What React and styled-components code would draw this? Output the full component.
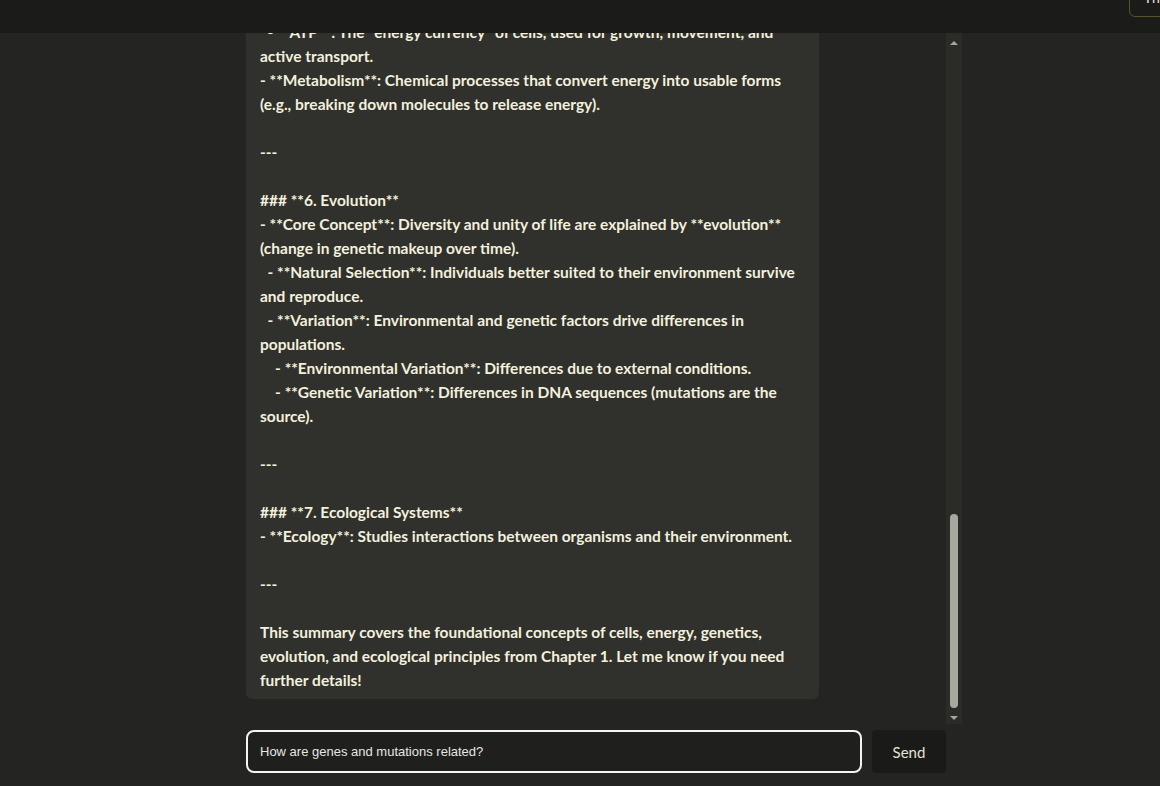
import React, { useLayoutEffect, useRef, useState } from 'react'
import styled, { createGlobalStyle } from 'styled-components'

const GlobalStyle = createGlobalStyle`
  html, body {
    margin: 0;
    padding: 0;
    background: #242422;
    overflow: hidden;
  }
`

const Page = styled.div`
  width: 100vw;
  height: 100vh;
  display: flex;
  flex-direction: column;
  font-family: Lato, "Open Sans", sans-serif;
`

const TopBar = styled.div`
  height: 33px;
  flex-shrink: 0;
  background: #1b1b19;
  display: flex;
  justify-content: flex-end;
  align-items: flex-start;
  overflow: hidden;
`

const ThemeButton = styled.button`
  margin-top: -11px;
  margin-right: -41px;
  height: 28px;
  padding: 0 14px 10px;
  background: #1b1b19;
  color: #e8e6dc;
  border: 1px solid #57532f;
  border-radius: 6px;
  font-family: Lato, sans-serif;
  font-size: 14px;
  display: flex;
  align-items: flex-end;
`

const Main = styled.div`
  margin-left: 246px;
  width: 716px;
  display: flex;
  flex-direction: column;
`

const ChatFrame = styled.div`
  position: relative;
  height: 691px;
`

const ChatScroll = styled.div`
  height: 100%;
  box-sizing: border-box;
  padding-bottom: 25px;
  overflow-y: scroll;
  scrollbar-width: none;
  display: flex;
  flex-direction: column;
  gap: 12px;
`

const ScrollRail = styled.div`
  position: absolute;
  top: 0;
  right: 0;
  bottom: 0;
  width: 16px;
  background: #2b2b28;
`

const Arrow = styled.div`
  position: absolute;
  left: 4px;
  ${p => (p.$down ? 'bottom: 4px;' : 'top: 8px;')}
  width: 0;
  height: 0;
  border-left: 4px solid transparent;
  border-right: 4px solid transparent;
  ${p => (p.$down ? 'border-top' : 'border-bottom')}: 4px solid #a6a59c;
`

const Thumb = styled.div`
  position: absolute;
  left: 4px;
  width: 8px;
  border-radius: 4px;
  background: #a9a8a0;
`

const Bubble = styled.div`
  align-self: ${p => (p.$user ? 'flex-end' : 'flex-start')};
  flex-shrink: 0;
  max-width: 80%;
  width: ${p => (p.$user ? 'auto' : '80%')};
  box-sizing: border-box;
  padding: 7px 14px;
  background: ${p => (p.$user ? '#3a3a36' : '#30302d')};
  border-radius: 6px;
  color: #f3f0dc;
  font-size: 15.5px;
  font-weight: 700;
  line-height: 24px;
  white-space: pre-wrap;
`

const InputRow = styled.form`
  margin-top: 6px;
  width: 700px;
  display: flex;
  gap: 10px;
`

const Input = styled.input`
  flex: 1;
  height: 43px;
  box-sizing: border-box;
  padding: 0 12px;
  background: #1f1f1d;
  border: 2px solid #f4f4f0;
  border-radius: 8px;
  color: #e6e6e2;
  caret-color: #ffffff;
  font-family: "Liberation Sans", Arial, sans-serif;
  font-size: 13px;
  outline: none;
`

const SendButton = styled.button`
  width: 74px;
  height: 43px;
  background: #1a1a18;
  border: none;
  border-radius: 4px;
  color: #e4e2da;
  font-family: Lato, sans-serif;
  font-size: 15px;
`

const greeting = `Hello! I have read your uploaded textbook. Ask me anything about its chapters, and I will answer using the content of the book.`

const topics = `Chapter 1 introduces the study of life. It covers:

- The characteristics shared by all living things
- The levels of biological organization
- The structure of cells
- Genetics and heredity
- Energy and metabolism
- Evolution as the unifying theme of biology
- Ecological systems

Would you like a detailed summary?`

const summary = `Here is a summary of the key concepts from Chapter 1:

---

### **1. Characteristics of Life**
- **Core Concept**: All living things share a set of common properties.
  - **Order**: Organisms are highly organized, structured systems.
  - **Reproduction**: Life comes only from life (biogenesis).
  - **Growth and Development**: Inherited information in genes controls patterns of growth.
  - **Response to Stimuli**: Organisms react to changes in their environment.
  - **Homeostasis**: Maintenance of a stable internal environment.

---

### **2. Levels of Organization**
- **Core Concept**: Life is organized in a hierarchy from atoms to the biosphere.
  - **Molecules → Organelles → Cells → Tissues → Organs → Organ Systems → Organisms**.
  - **Populations → Communities → Ecosystems → Biosphere**.
- **Emergent Properties**: New properties arise at each level due to the interaction of parts.

---

### **3. Cells**
- **Core Concept**: The cell is the basic unit of structure and function in all organisms.
  - **Prokaryotic Cells**: Lack a nucleus and membrane-bound organelles (e.g., bacteria).
  - **Eukaryotic Cells**: Have a nucleus and membrane-bound organelles (e.g., plants, animals).
- **Cell Theory**: All organisms are made of cells, and all cells come from pre-existing cells.

---

### **4. Genetics and Heredity**
- **Core Concept**: DNA carries the genetic information of all living things.
  - **Genes**: Units of inheritance that code for proteins.
  - **Gene Expression**: DNA → RNA → Protein.
- **Heredity**: Genetic information is passed from parents to offspring.

---

### **5. Energy and Metabolism**
- **Core Concept**: Organisms need energy to stay alive and carry out life processes.
  - **ATP**: The "energy currency" of cells, used for growth, movement, and active transport.
- **Metabolism**: Chemical processes that convert energy into usable forms (e.g., breaking down molecules to release energy).

---

### **6. Evolution**
- **Core Concept**: Diversity and unity of life are explained by **evolution** (change in genetic makeup over time).
  - **Natural Selection**: Individuals better suited to their environment survive and reproduce.
  - **Variation**: Environmental and genetic factors drive differences in populations.
    - **Environmental Variation**: Differences due to external conditions.
    - **Genetic Variation**: Differences in DNA sequences (mutations are the source).

---

### **7. Ecological Systems**
- **Ecology**: Studies interactions between organisms and their environment.

---

This summary covers the foundational concepts of cells, energy, genetics, evolution, and ecological principles from Chapter 1. Let me know if you need further details!`

const messages = [
  { id: 1, user: false, text: greeting },
  { id: 2, user: true, text: 'What topics does chapter 1 cover?' },
  { id: 3, user: false, text: topics },
  { id: 4, user: true, text: 'Summarize chapter 1' },
  { id: 5, user: false, text: summary },
]

const ARROW_SPACE = 14

export default function App() {
  const scrollRef = useRef(null)
  const [question, setQuestion] = useState('How are genes and mutations related?')
  const [thumb, setThumb] = useState({ top: ARROW_SPACE, height: 0 })

  const updateThumb = () => {
    const el = scrollRef.current
    if (!el) return
    const track = el.clientHeight - ARROW_SPACE * 2 - 4
    const height = Math.max(24, track * (el.clientHeight / el.scrollHeight))
    const max = el.scrollHeight - el.clientHeight
    const ratio = max > 0 ? el.scrollTop / max : 0
    setThumb({ top: ARROW_SPACE + 2 + (track - height) * ratio, height })
  }

  useLayoutEffect(() => {
    const el = scrollRef.current
    if (el) el.scrollTop = el.scrollHeight
    updateThumb()
  }, [])

  return (
    <Page>
      <GlobalStyle />
      <TopBar>
        <ThemeButton>Theme</ThemeButton>
      </TopBar>
      <Main>
        <ChatFrame>
          <ChatScroll ref={scrollRef} onScroll={updateThumb}>
            {messages.map(m => (
              <Bubble key={m.id} $user={m.user}>{m.text}</Bubble>
            ))}
          </ChatScroll>
          <ScrollRail>
            <Arrow />
            <Thumb style={{ top: thumb.top, height: thumb.height }} />
            <Arrow $down />
          </ScrollRail>
        </ChatFrame>
        <InputRow onSubmit={e => e.preventDefault()}>
          <Input autoFocus value={question} onChange={e => setQuestion(e.target.value)} />
          <SendButton type="submit">Send</SendButton>
        </InputRow>
      </Main>
    </Page>
  )
}
